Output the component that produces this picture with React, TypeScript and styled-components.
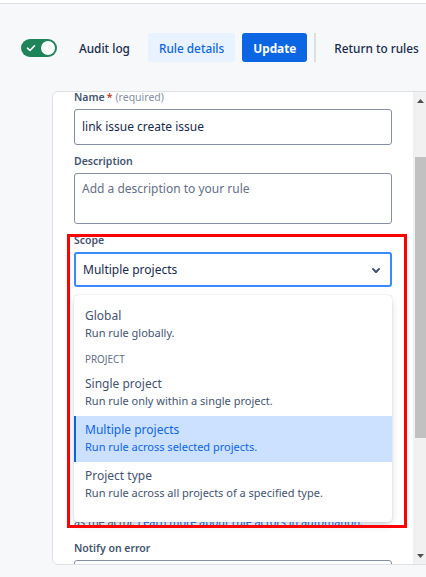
import React from 'react';
import styled, { createGlobalStyle } from 'styled-components';

const GlobalStyle = createGlobalStyle`
  html, body {
    margin: 0;
    padding: 0;
  }
  body {
    width: 426px;
    height: 577px;
    overflow: hidden;
    background: #f7f8f9;
    font-family: "Noto Sans", "Open Sans", sans-serif;
    color: #172b4d;
  }
  * {
    box-sizing: border-box;
  }
`;

const TopStrip = styled.div`
  height: 4px;
  background: #fff;
  border-bottom: 1px solid #dcdfe4;
`;

const Toolbar = styled.div`
  display: flex;
  align-items: center;
  height: 29px;
  margin-top: 29px;
  padding-left: 21px;
  white-space: nowrap;
`;

const Toggle = styled.span`
  display: flex;
  align-items: center;
  justify-content: space-between;
  width: 36px;
  height: 18px;
  padding: 0 2px 0 5px;
  border-radius: 9px;
  background: #1f845a;
  margin-right: 11px;
  flex-shrink: 0;
`;

const Knob = styled.span`
  width: 14px;
  height: 14px;
  border-radius: 50%;
  background: #fff;
`;

const Button = styled.button<{ $variant?: 'subtle' | 'selected' | 'primary' }>`
  height: 29px;
  padding: 0 11px;
  border: none;
  border-radius: 3px;
  font-family: inherit;
  font-size: 11.8px;
  font-weight: ${(p) => (p.$variant === 'primary' ? 700 : 500)};
  background: ${(p) =>
    p.$variant === 'primary' ? '#0c66e4' : p.$variant === 'selected' ? '#e9f2ff' : 'transparent'};
  color: ${(p) =>
    p.$variant === 'primary' ? '#fff' : p.$variant === 'selected' ? '#0c66e4' : '#172b4d'};
  margin-right: 7px;
  flex-shrink: 0;
  cursor: pointer;
`;

const Divider = styled.span`
  width: 2px;
  height: 29px;
  background: #dcdfe4;
  margin-right: 7px;
  flex-shrink: 0;
`;

const Panel = styled.div`
  display: flex;
  width: 377px;
  height: 474px;
  margin: 29px 0 0 52px;
  background: #fff;
  border: 1px solid #dcdfe4;
  border-radius: 6px 0 0 6px;
  overflow: hidden;
`;

const Content = styled.div`
  flex: 1;
  overflow: hidden;
  padding: 0 21px;
`;

const Form = styled.div`
  margin-top: -3px;
`;

const Field = styled.div<{ $gap?: number }>`
  position: relative;
  margin-top: ${(p) => p.$gap ?? 8}px;
`;

const Label = styled.label`
  display: block;
  font-size: 10.5px;
  line-height: 16px;
  font-weight: 600;
  color: #44546f;
  margin-bottom: 4px;
`;

const Required = styled.span`
  color: #c9372c;
  margin-left: 2px;
`;

const Hint = styled.span`
  color: #8590a2;
  font-weight: 400;
  margin-left: 3px;
`;

const TextInput = styled.div<{ $tall?: boolean; $placeholder?: boolean }>`
  height: ${(p) => (p.$tall ? 51 : 36)}px;
  border: 1px solid #8590a2;
  border-radius: 3px;
  padding: ${(p) => (p.$tall ? '5px 7px' : '0 7px')};
  display: flex;
  align-items: ${(p) => (p.$tall ? 'flex-start' : 'center')};
  font-size: 12px;
  line-height: 20px;
  color: ${(p) => (p.$placeholder ? '#626f86' : '#172b4d')};
`;

const Select = styled.div`
  height: 35px;
  border: 2px solid #388bff;
  border-radius: 3px;
  padding: 0 2px 0 7px;
  display: flex;
  align-items: center;
  justify-content: space-between;
  font-size: 12px;
  color: #172b4d;
`;

const Menu = styled.div`
  position: absolute;
  top: calc(100% + 8px);
  left: 0;
  width: 100%;
  padding: 7px 0 14px;
  background: #fff;
  border-radius: 4px;
  box-shadow: 0 4px 8px -2px rgba(9, 30, 66, 0.25), 0 0 1px rgba(9, 30, 66, 0.31);
  z-index: 2;
`;

const Option = styled.div<{ $selected?: boolean }>`
  padding: 5px 11px 7px;
  background: ${(p) => (p.$selected ? '#cce0ff' : 'transparent')};
  box-shadow: ${(p) => (p.$selected ? 'inset 2px 0 0 #0c66e4' : 'none')};
  color: ${(p) => (p.$selected ? '#0c66e4' : '#44546f')};
`;

const OptionTitle = styled.div`
  font-size: 12px;
  line-height: 18px;
`;

const OptionDesc = styled.div`
  font-size: 11px;
  line-height: 16px;
`;

const GroupHeading = styled.div`
  padding: 4px 11px;
  font-size: 9.9px;
  line-height: 14px;
  color: #626f86;
  text-transform: uppercase;
`;

const Annotation = styled.div`
  position: absolute;
  top: 2px;
  left: -7px;
  width: 340px;
  height: 294px;
  border: 3px solid #ff0000;
  z-index: 3;
  pointer-events: none;
`;

const SelectWrap = styled.div`
  position: relative;
`;

const Covered = styled.div`
  height: 227px;
  padding-top: 20px;
  display: flex;
  flex-direction: column;
  gap: 28px;
  overflow: hidden;
`;

const HelpText = styled.div`
  font-size: 10.8px;
  line-height: 16px;
  color: #44546f;
  white-space: nowrap;
`;

const Link = styled.a`
  color: #0c66e4;
  text-decoration: none;
`;

const Scrollbar = styled.div`
  width: 15px;
  display: flex;
  flex-direction: column;
  background: #f1f1f1;
`;

const ScrollButton = styled.div`
  height: 17px;
  display: flex;
  align-items: center;
  justify-content: center;
`;

const Track = styled.div`
  flex: 1;
  padding: 48px 2px 0;
`;

const Thumb = styled.div`
  height: 281px;
  background: #c1c1c1;
`;

const Check = () => (
  <svg width="10" height="10" viewBox="0 0 10 10">
    <path d="M1.5 5.2 L4 7.5 L8.5 2.8" fill="none" stroke="#fff" strokeWidth="1.6" strokeLinecap="round" strokeLinejoin="round" />
  </svg>
);

const Chevron = () => (
  <svg width="24" height="24" viewBox="0 0 24 24">
    <path
      fill="#44546f"
      d="M8.292 10.293a1.009 1.009 0 000 1.419l2.939 2.965c.218.215.5.322.779.322s.556-.107.769-.322l2.93-2.955a1.01 1.01 0 000-1.419.987.987 0 00-1.406 0l-2.298 2.317-2.307-2.327a.99.99 0 00-1.406 0z"
    />
  </svg>
);

const Arrow = ({ up }: { up?: boolean }) => (
  <svg width="7" height="4" viewBox="0 0 7 4">
    <path d={up ? 'M0 4 L3.5 0 L7 4 Z' : 'M0 0 L3.5 4 L7 0 Z'} fill="#505050" />
  </svg>
);

const scopeOptions = [
  { title: 'Single project', desc: 'Run rule only within a single project.' },
  { title: 'Multiple projects', desc: 'Run rule across selected projects.', selected: true },
  { title: 'Project type', desc: 'Run rule across all projects of a specified type.' },
];

export default function App() {
  return (
    <>
      <GlobalStyle />
      <TopStrip />
      <Toolbar>
        <Toggle>
          <Check />
          <Knob />
        </Toggle>
        <Button>Audit log</Button>
        <Button $variant="selected">Rule details</Button>
        <Button $variant="primary">Update</Button>
        <Divider />
        <Button>Return to rules</Button>
      </Toolbar>
      <Panel>
        <Content>
          <Form>
            <Field $gap={0}>
              <Label>
                Name<Required>*</Required>
                <Hint>(required)</Hint>
              </Label>
              <TextInput>link issue create issue</TextInput>
            </Field>
            <Field>
              <Label>Description</Label>
              <TextInput $tall $placeholder>
                Add a description to your rule
              </TextInput>
            </Field>
            <Field>
              <Annotation />
              <Label>Scope</Label>
              <SelectWrap>
                <Select>
                  Multiple projects
                  <Chevron />
                </Select>
                <Menu>
                  <Option>
                    <OptionTitle>Global</OptionTitle>
                    <OptionDesc>Run rule globally.</OptionDesc>
                  </Option>
                  <GroupHeading>Project</GroupHeading>
                  {scopeOptions.map((o) => (
                    <Option key={o.title} $selected={o.selected}>
                      <OptionTitle>{o.title}</OptionTitle>
                      <OptionDesc>{o.desc}</OptionDesc>
                    </Option>
                  ))}
                </Menu>
              </SelectWrap>
            </Field>
            <Covered>
              <TextInput />
              <TextInput />
            </Covered>
            <HelpText>
              as the actor. <Link href="#">Learn more about rule actors in automation.</Link>
            </HelpText>
            <Field $gap={10}>
              <Label>Notify on error</Label>
              <TextInput />
            </Field>
          </Form>
        </Content>
        <Scrollbar>
          <ScrollButton>
            <Arrow up />
          </ScrollButton>
          <Track>
            <Thumb />
          </Track>
          <ScrollButton>
            <Arrow />
          </ScrollButton>
        </Scrollbar>
      </Panel>
    </>
  );
}
